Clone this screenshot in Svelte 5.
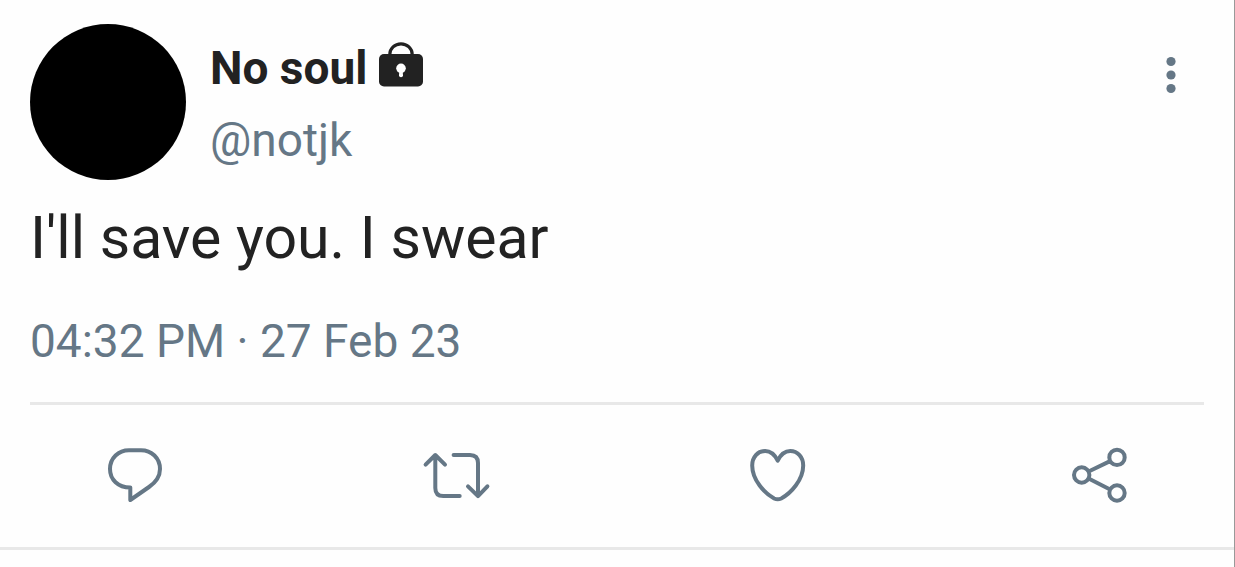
<script>
    const tweet = {
        name: "No soul",
        handle: "@notjk",
        text: "I'll save you. I swear",
        time: "04:32 PM",
        date: "27 Feb 23",
    };

    // Stroked icons, all on a 72 x 72 grid
    const actions = [
        {
            label: "Reply",
            path: "M31.3 48.6C19 48.6 11 40.5 11 30C11 19 19.5 11.2 30 11.2H42C52.5 11.2 61 19 61 30C61 38 56.5 43.5 50 48L31.3 61Z",
        },
        {
            label: "Retweet",
            path: "M5.6 25.7L15.3 16L25 25.7M15.3 17V49Q15.3 57 23.3 57H39.7M33.6 16H50Q58 16 58 24V56.5M48 47.3L58 57.2L67.4 47.3",
        },
        {
            label: "Like",
            path: "M35.7 21.7C32.7 15.5 28.2 12 23.2 12C15.7 12 10.2 18 10.2 26.5C10.2 41 22.7 54.5 32.2 59.5Q35.7 61.2 39.2 59.5C48.7 54.5 61.2 41 61.2 26.5C61.2 18 55.7 12 48.2 12C43.2 12 38.7 15.5 35.7 21.7Z",
        },
        {
            label: "Share",
            path: "M25.6 32.5L47.1 22.1M25.6 39.5L47.1 50.5M26.4 36a7.7 7.7 0 1 1-15.4 0a7.7 7.7 0 1 1 15.4 0M61.7 18.4a7.7 7.7 0 1 1-15.4 0a7.7 7.7 0 1 1 15.4 0M61.7 54a7.7 7.7 0 1 1-15.4 0a7.7 7.7 0 1 1 15.4 0",
        },
    ];
</script>

<main class="page">
    <article class="tweet">
        <header class="head">
            <div class="avatar"></div>

            <div class="who">
                <div class="name">
                    <span>{tweet.name}</span>
                    <svg class="lock" viewBox="0 0 44 45" role="img" aria-label="Protected account">
                        <path d="M10.8 14V12.4a11.2 10.6 0 0 1 22.4 0V14" fill="none" stroke="currentColor" stroke-width="3.2" />
                        <rect y="12" width="44" height="32.4" rx="5" fill="currentColor" />
                        <circle cx="22" cy="26.3" r="4.8" fill="#fff" />
                        <path d="M20.4 28L20 33.2Q20 35.2 22 35.2T24 33.2L23.6 28Z" fill="#fff" />
                    </svg>
                </div>
                <div class="handle">{tweet.handle}</div>
            </div>

            <button class="more" aria-label="More options">
                <svg viewBox="0 0 24 42">
                    <circle cx="12" cy="7.5" r="4.6" />
                    <circle cx="12" cy="21" r="4.6" />
                    <circle cx="12" cy="34.5" r="4.6" />
                </svg>
            </button>
        </header>

        <p class="text">{tweet.text}</p>
        <div class="meta">{tweet.time} · {tweet.date}</div>

        <footer class="actions">
            {#each actions as action}
                <button aria-label={action.label}>
                    <svg viewBox="0 0 72 72"><path d={action.path} /></svg>
                </button>
            {/each}
        </footer>
    </article>
</main>

<style>
    :global(body) {
        margin: 0;
        background: #fefefe;
        font-family: Roboto, "Liberation Sans", sans-serif;
    }

    .page {
        --ink: #222222;
        --muted: #657786;
        --line: #e8e8e8;
        box-sizing: border-box;
        min-height: 100vh;
        border-right: 1px solid #999;
        color: var(--ink);
    }

    .tweet {
        padding: 24px 30px 0;
        border-bottom: 3px solid var(--line);
    }

    button {
        display: block;
        padding: 0;
        border: 0;
        background: none;
        color: var(--muted);
        cursor: pointer;
    }

    svg {
        display: block;
    }

    /* === HEADER === */
    .head {
        display: flex;
        align-items: flex-start;
        gap: 24px;
    }

    .avatar {
        flex: none;
        width: 156px;
        height: 156px;
        border-radius: 50%;
        background: #000;
    }

    .who {
        flex: 1;
        padding-top: 8px;
        font-size: 46px;
        line-height: 72px;
    }

    .name {
        display: flex;
        align-items: center;
        gap: 12px;
        font-weight: 700;
    }

    .lock {
        width: 44px;
        height: 45px;
        margin-bottom: 8px;
    }

    .handle {
        color: var(--muted);
    }

    .more {
        margin: 30px 21px 0 0;
    }

    .more svg {
        width: 24px;
        height: 42px;
        fill: currentColor;
    }

    /* === BODY === */
    .text {
        margin: 22px 0 40px;
        font-size: 59px;
        line-height: 72px;
    }

    .meta {
        padding-bottom: 34px;
        border-bottom: 3px solid var(--line);
        color: var(--muted);
        font-size: 46px;
        line-height: 54px;
    }

    /* === ACTION ROW === */
    .actions {
        display: flex;
        justify-content: space-between;
        padding: 34px 69px 36px;
    }

    .actions svg {
        width: 72px;
        height: 72px;
        fill: none;
        stroke: currentColor;
        stroke-width: 4;
        stroke-linecap: round;
        stroke-linejoin: round;
    }
</style>
